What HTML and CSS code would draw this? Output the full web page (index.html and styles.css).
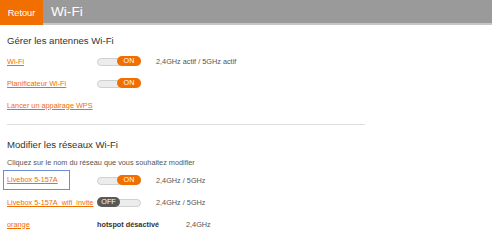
FILE: index.html
```html
<!DOCTYPE html>
<html lang="fr">
<head>
<meta charset="utf-8">
<title>Wi-Fi</title>
<link rel="stylesheet" href="styles.css">
</head>
<body>
<header class="topbar">
  <a class="back" href="#">Retour</a>
  <div class="title">Wi-Fi</div>
</header>
<main class="content">
  <section class="block">
    <h2 class="block-title">Gérer les antennes Wi-Fi</h2>
    <div class="row">
      <a class="link" href="#">Wi-Fi</a>
      <span class="toggle on"><span class="knob">ON</span></span>
      <span class="status">2,4GHz actif / 5GHz actif</span>
    </div>
    <div class="row">
      <a class="link" href="#">Planificateur Wi-Fi</a>
      <span class="toggle on"><span class="knob">ON</span></span>
      <span class="status"></span>
    </div>
    <div class="row">
      <a class="link wide" href="#">Lancer un appairage WPS</a>
    </div>
  </section>
  <hr class="sep">
  <section class="block">
    <h2 class="block-title second">Modifier les réseaux Wi-Fi</h2>
    <p class="hint">Cliquez sur le nom du réseau que vous souhaitez modifier</p>
    <div class="row net">
      <a class="link focused" href="#">Livebox 5-157A</a>
      <span class="toggle on"><span class="knob">ON</span></span>
      <span class="status">2,4GHz / 5GHz</span>
    </div>
    <div class="row net">
      <a class="link" href="#">Livebox 5-157A_wifi_invite</a>
      <span class="toggle off"><span class="knob">OFF</span></span>
      <span class="status">2,4GHz / 5GHz</span>
    </div>
    <div class="row net hotspot">
      <a class="link" href="#">orange</a>
      <span class="hs-state">hotspot désactivé</span>
      <span class="status">2,4GHz</span>
    </div>
  </section>
</main>
</body>
</html>
```
FILE: styles.css
```css
html, body {
  margin: 0;
  padding: 0;
  background: #ffffff;
  font-family: "Liberation Sans", Arial, sans-serif;
  color: #333333;
}

.topbar {
  display: flex;
  height: 25px;
  background: #9a9a9a;
}

.back {
  display: flex;
  align-items: center;
  justify-content: center;
  width: 43px;
  height: 25px;
  background: #f16e00;
  color: #ffffff;
  font-size: 9.2px;
  text-decoration: none;
}

.title {
  flex: 1;
  display: flex;
  align-items: center;
  padding-left: 8px;
  height: 23px;
  border-bottom: 2px solid #c6c6c6;
  color: #ffffff;
  font-size: 13.6px;
}

.content {
  padding: 0 7px;
}

.block-title {
  margin: 10px 0 3px;
  font-size: 9.6px;
  line-height: 12px;
  font-weight: normal;
  color: #333333;
}

.block-title.second {
  margin: 14px 0 7px;
}

.hint {
  margin: 0 0 1px;
  font-size: 7.3px;
  line-height: 10px;
  color: #555555;
}

.row {
  display: grid;
  grid-template-columns: 90px 59px auto;
  align-items: center;
  height: 22px;
}

.row.hotspot {
  grid-template-columns: 90px 89px auto;
}

.link {
  font-size: 7.3px;
  color: #f16e00;
  text-decoration: underline;
  white-space: nowrap;
  justify-self: start;
}

.link.wide {
  grid-column: 1 / 4;
}

.link.focused {
  margin-left: -4px;
  padding: 4px 11px 4px 3px;
  border: 1px solid #6a8fd8;
  line-height: 10px;
}

.toggle {
  position: relative;
  display: block;
  width: 44px;
  height: 10px;
}

.toggle::before {
  content: "";
  position: absolute;
  left: 0;
  right: 0;
  top: 1.5px;
  height: 6px;
  border: 0.5px solid #d0d0d0;
  border-radius: 4px;
  background: #ececec;
}

.knob {
  position: absolute;
  top: 0;
  width: 24px;
  height: 10px;
  border-radius: 5px;
  color: #ffffff;
  font-size: 7.2px;
  line-height: 10px;
  text-align: center;
}

.toggle.on .knob {
  right: 0;
  background: #f16e00;
}

.toggle.off .knob {
  left: 0;
  width: 23px;
  background: #595959;
}

.status {
  font-size: 7.3px;
  color: #555555;
  white-space: nowrap;
}

.hs-state {
  font-size: 7.3px;
  font-weight: bold;
  color: #333333;
}

.sep {
  width: 358px;
  margin: 8px 0 0;
  border: 0;
  border-top: 1px solid #dddddd;
  height: 0;
}
```
